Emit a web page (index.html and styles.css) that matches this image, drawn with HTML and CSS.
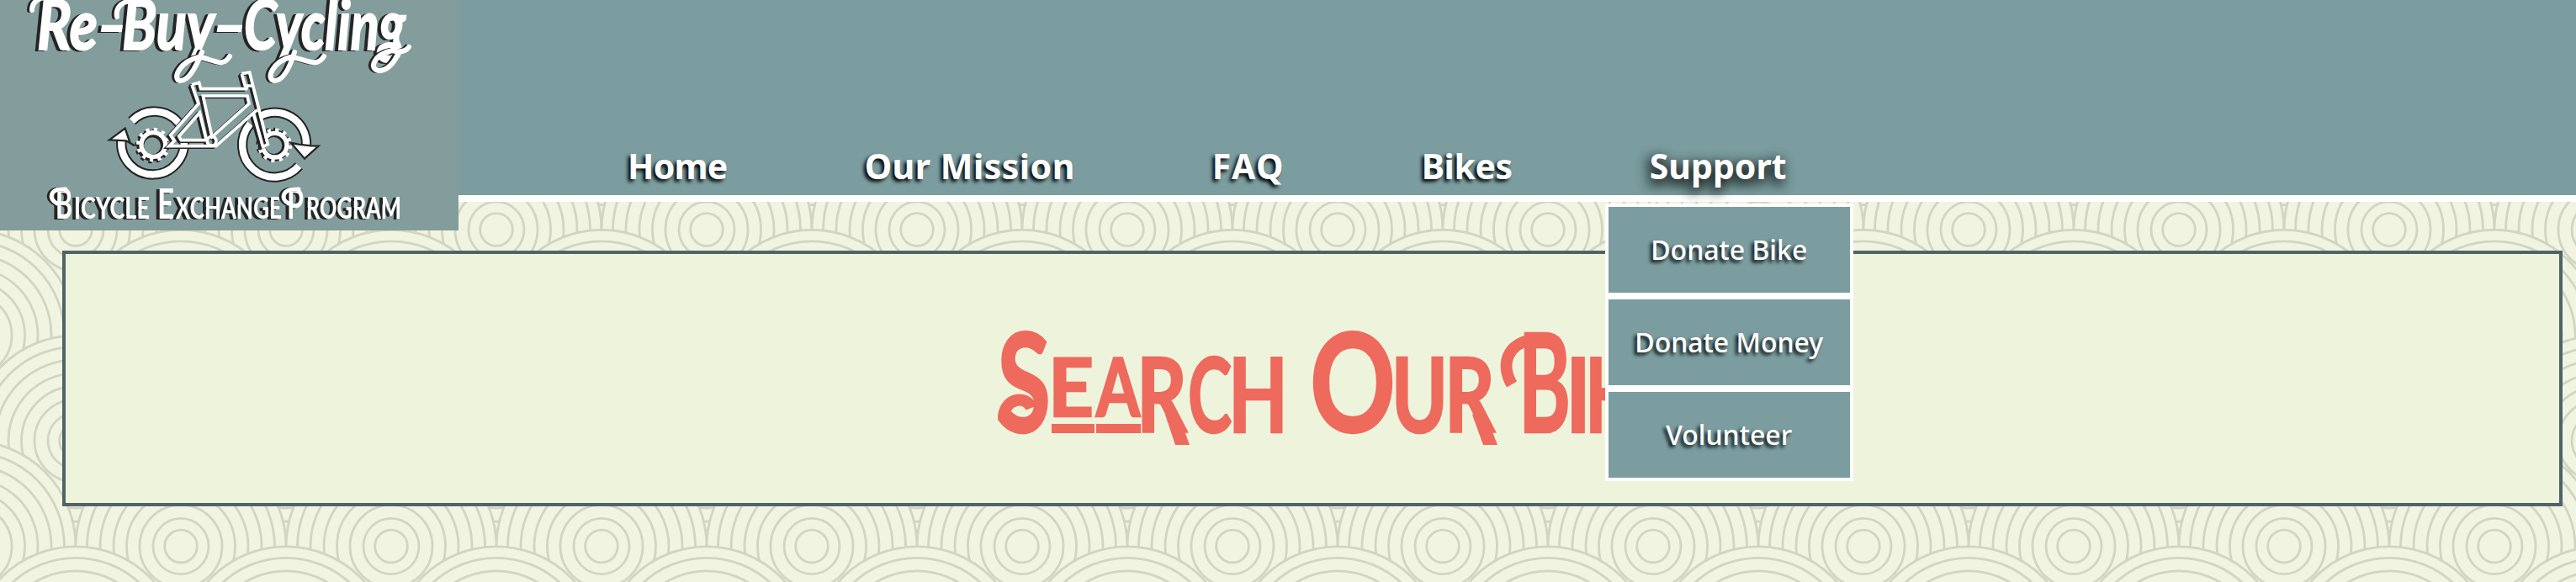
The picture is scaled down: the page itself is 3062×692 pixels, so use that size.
FILE: index.html
```html
<!DOCTYPE html>
<html lang="en">
<head>
<meta charset="utf-8">
<title>Re-Buy-Cycling</title>
<link rel="stylesheet" href="styles.css">
</head>
<body>
<header class="header">
  <a class="logo" href="#">
    <svg class="logo-art" viewBox="0 0 545 274" role="img" aria-label="Re-Buy-Cycling Bicycle Exchange Program">
      <g class="logo-text">
        <text class="brand" y="59"><tspan x="44" textLength="72" lengthAdjust="spacingAndGlyphs">Re</tspan><tspan class="dash" x="115" textLength="36" lengthAdjust="spacingAndGlyphs">-</tspan><tspan x="145" textLength="110" lengthAdjust="spacingAndGlyphs">Buy</tspan><tspan class="dash" x="252" textLength="42" lengthAdjust="spacingAndGlyphs">-</tspan><tspan x="290" textLength="192" lengthAdjust="spacingAndGlyphs">Cycling</tspan></text>
        <text class="tagline" y="260"><tspan class="cap" x="66" textLength="20" lengthAdjust="spacingAndGlyphs">B</tspan><tspan x="88" textLength="90" lengthAdjust="spacingAndGlyphs">ICYCLE</tspan> <tspan class="cap" x="187" textLength="20" lengthAdjust="spacingAndGlyphs">E</tspan><tspan x="209" textLength="126" lengthAdjust="spacingAndGlyphs">XCHANGE</tspan> <tspan class="cap" x="341" textLength="20" lengthAdjust="spacingAndGlyphs">P</tspan><tspan x="364" textLength="113" lengthAdjust="spacingAndGlyphs">ROGRAM</tspan></text>
      </g>
      <!-- swashes around the lettering -->
      <g class="swash">
        <path d="M38 12C38 3 45 -3 56 -3"/>
        <path d="M139 20C137 8 146 1 158 1"/>
        <path d="M240 62C232 82 224 96 214 96C204 94 214 73 236 68C252 69 264 82 273 67"/>
        <path d="M350 62C344 82 336 96 326 96C315 94 325 73 345 68C362 69 376 82 385 67"/>
        <path d="M474 62C468 76 460 84 450 84C438 82 444 65 466 60Q480 64 486 56"/>
        <path class="fine" d="M68 242C56 236 61 225 73 225H78"/>
        <path class="fine" d="M343 242C332 236 337 225 350 225H355"/>
      </g>
      <g class="bike" transform="translate(100 60) scale(.33333)">
        <g class="tyre-shade">
          <path d="M170 252A112 112 0 0 1 340 262"/>
          <path d="M133 322A112 112 0 1 0 356 318"/>
          <path d="M592 262A112 112 0 0 0 766 412"/>
          <path d="M622 237A112 112 0 0 1 792 340"/>
        </g>
        <g class="tyre">
          <path d="M170 252A112 112 0 0 1 340 262"/>
          <path d="M133 322A112 112 0 1 0 356 318"/>
          <path d="M592 262A112 112 0 0 0 766 412"/>
          <path d="M622 237A112 112 0 0 1 792 340"/>
        </g>
        <path class="arrow" d="M90 319L146 278L164 330L180 340L150 322Z"/>
        <path class="arrow" d="M738 330L765 335L810 340L836 341L786 386Z"/>
        <g class="gear">
          <circle class="teeth dark" cx="242" cy="342" r="52"/>
          <circle class="rim dark" cx="243" cy="340" r="43"/>
          <circle class="teeth" cx="247" cy="336" r="52"/>
          <circle class="rim" cx="247" cy="336" r="43"/>
          <circle class="teeth dark" cx="674" cy="336" r="52"/>
          <circle class="rim dark" cx="676" cy="339" r="43"/>
          <circle class="teeth" cx="680" cy="338" r="52"/>
          <circle class="rim" cx="680" cy="338" r="43"/>
        </g>
        <g class="frame-shade" transform="translate(-9 5)">
          <path d="M384 122L410 115L416 137H578L582 128M384 122L408 190L308 302L322 322L303 341H470L600 226L618 212"/>
          <path d="M424 162H582L588 190L456 308ZM412 222L338 306L346 320H436Z"/>
          <path d="M562 83L590 78L655 335L638 344L604 226M562 83L574 126H600"/>
          <circle cx="455" cy="323" r="16"/>
        </g>
        <g class="frame">
          <path d="M384 122L410 115L416 137H578L582 128M384 122L408 190L308 302L322 322L303 341H470L600 226L618 212"/>
          <path d="M424 162H582L588 190L456 308ZM412 222L338 306L346 320H436Z"/>
          <path d="M562 83L590 78L655 335L638 344L604 226M562 83L574 126H600"/>
          <circle cx="455" cy="323" r="16"/>
        </g>
      </g>
    </svg>
  </a>
  <nav class="nav">
    <a class="home" href="#">Home</a>
    <a class="mission" href="#">Our Mission</a>
    <a class="faq" href="#">FAQ</a>
    <a class="bikes" href="#">Bikes</a>
    <div class="nav-group">
      <a class="active" href="#">Support</a>
      <div class="menu">
        <a href="#">Donate Bike</a>
        <a href="#">Donate Money</a>
        <a href="#">Volunteer</a>
      </div>
    </div>
  </nav>
</header>
<main class="panel">
  <svg class="title" viewBox="0 0 900 160" role="img" aria-label="Search Our Bikes">
    <text y="133"><tspan class="big" x="5" textLength="64" lengthAdjust="spacingAndGlyphs">S</tspan><tspan class="low" x="66" y="114" textLength="54" lengthAdjust="spacingAndGlyphs">E</tspan><tspan class="low" x="123" y="114" textLength="52" lengthAdjust="spacingAndGlyphs">A</tspan><tspan x="171" y="133" textLength="60" lengthAdjust="spacingAndGlyphs">R</tspan><tspan x="232" textLength="52" lengthAdjust="spacingAndGlyphs">C</tspan><tspan x="280" textLength="71" lengthAdjust="spacingAndGlyphs">H</tspan> <tspan class="big" x="377" textLength="102" lengthAdjust="spacingAndGlyphs">O</tspan><tspan x="474" textLength="67" lengthAdjust="spacingAndGlyphs">U</tspan><tspan x="537" textLength="60" lengthAdjust="spacingAndGlyphs">R</tspan> <tspan class="big" x="625" textLength="62" lengthAdjust="spacingAndGlyphs">B</tspan><tspan x="681" textLength="30" lengthAdjust="spacingAndGlyphs">I</tspan><tspan x="704" textLength="60" lengthAdjust="spacingAndGlyphs">K</tspan><tspan x="764" textLength="50" lengthAdjust="spacingAndGlyphs">E</tspan><tspan x="814" textLength="50" lengthAdjust="spacingAndGlyphs">S</tspan></text>
    <path class="title-rule" d="M70 123h51v11H70zM123 123h53v11h-53zM205 112h16l13 36h-17zM570 112h16l14 36h-17z"/>
    <path class="title-swash" d="M617 76C602 50 614 23 648 23"/>
    <path class="title-swash" d="M46 104C40 88 12 92 13 118"/>
  </svg>
</main>
</body>
</html>
```
FILE: styles.css
```css
* { box-sizing: border-box; }

body {
  margin: 0;
  height: 692px;
  overflow: hidden;
  font-family: "Noto Sans", "Open Sans", sans-serif;
  background-color: #f1f4e0;
  background-image: url("data:image/svg+xml,%3Csvg xmlns='http://www.w3.org/2000/svg' xmlns:xlink='http://www.w3.org/1999/xlink' width='250' height='250.6' viewBox='0 0 250 250.6'%3E%3Cdefs%3E%3Cg id='c' fill='none' stroke='%23d1d5c2' stroke-width='2.8'%3E%3Ccircle r='125' fill='%23f1f4e0'/%3E%3Ccircle r='111.5'/%3E%3Ccircle r='96'/%3E%3Ccircle r='80'/%3E%3Ccircle r='64.5'/%3E%3Ccircle r='49'/%3E%3Ccircle r='33'/%3E%3Ccircle r='19.3'/%3E%3C/g%3E%3C/defs%3E%3Cuse href='%23c' x='125' y='-125.3'/%3E%3Cuse href='%23c'/%3E%3Cuse href='%23c' x='250'/%3E%3Cuse href='%23c' x='125' y='125.3'/%3E%3Cuse href='%23c' y='250.6'/%3E%3Cuse href='%23c' x='250' y='250.6'/%3E%3Cuse href='%23c' x='125' y='375.9'/%3E%3C/svg%3E");
  background-size: 250px 250.6px;
  background-position: 89.7px 273.3px;
}

.header {
  position: relative;
  display: flex;
  align-items: flex-start;
  height: 240px;
  background: #7b9d9f;
  border-bottom: 8px solid #fff;
}

.logo { width: 545px; height: 274px; flex: none; background: #839d9d; }
.logo-art { display: block; width: 545px; height: 274px; overflow: hidden; }
.logo-text { fill: #fff; filter: drop-shadow(-4px 1px 0 #242424); }
.brand { font: italic 700 82px Lato, sans-serif; stroke: #fff; stroke-width: 2; }
.brand .dash { stroke: none; }
.tagline { font: 700 37px Lato, sans-serif; }
.tagline .cap { font-size: 49px; }
.swash { fill: none; stroke: #fff; stroke-width: 6; stroke-linecap: round; filter: drop-shadow(-3px 0 0 #242424); }
.swash .fine { stroke-width: 5; }

.bike { fill: none; stroke: #fff; }
.tyre { stroke-width: 25; }
.tyre-shade { stroke: #242424; stroke-width: 37; }
.arrow { fill: #fff; stroke: #242424; stroke-width: 7; }
.rim { stroke-width: 16; }
.teeth { stroke-width: 18; stroke-dasharray: 12 15.2; }
.dark { stroke: #242424; }
.rim.dark { stroke-width: 26; }
.frame { stroke-width: 11; }
.frame-shade { stroke: #242424; stroke-width: 10; }

.nav {
  display: flex;
  gap: 163px;
  padding: 167px 0 0 201px;
}
.nav a {
  display: block;
  color: #fff;
  text-decoration: none;
  white-space: nowrap;
  font-size: 41px;
  font-weight: 700;
  line-height: 60px;
  text-shadow: -3px 3px 4px #000;
}
.nav .home { letter-spacing: -.7px; }
.nav .mission { letter-spacing: .5px; }
.nav .faq { letter-spacing: 1.4px; }
.nav .bikes { letter-spacing: -.4px; }
.nav a.active { text-shadow: -3px 6px 16px #000, -2px 4px 14px rgba(0, 0, 0, .5); }
.nav-group { position: relative; }

.menu {
  position: absolute;
  top: 75px;
  left: -53px;
  width: 295px;
  z-index: 2;
}
.nav .menu a {
  height: 110px;
  border: 4px solid #fff;
  background: #7b9d9f;
  font-size: 32px;
  font-weight: 500;
  line-height: 101px;
  text-align: center;
}

.panel {
  display: flex;
  margin: 58px 16px 0 74px;
  height: 304px;
  border: 4px solid #4f6468;
  background: #eef3dc;
}
.title { width: 900px; height: 160px; margin: 79px 0 0 1102px; flex: none; overflow: visible; }
.title text { fill: #ee6a5d; stroke: #ee6a5d; stroke-width: 2.5; font: 700 122px Lato, sans-serif; }
.title .big { font-size: 162px; }
.title .low { font-size: 96px; }
.title-rule { fill: #ee6a5d; }
.title-swash { fill: none; stroke: #ee6a5d; stroke-width: 14; }
```
